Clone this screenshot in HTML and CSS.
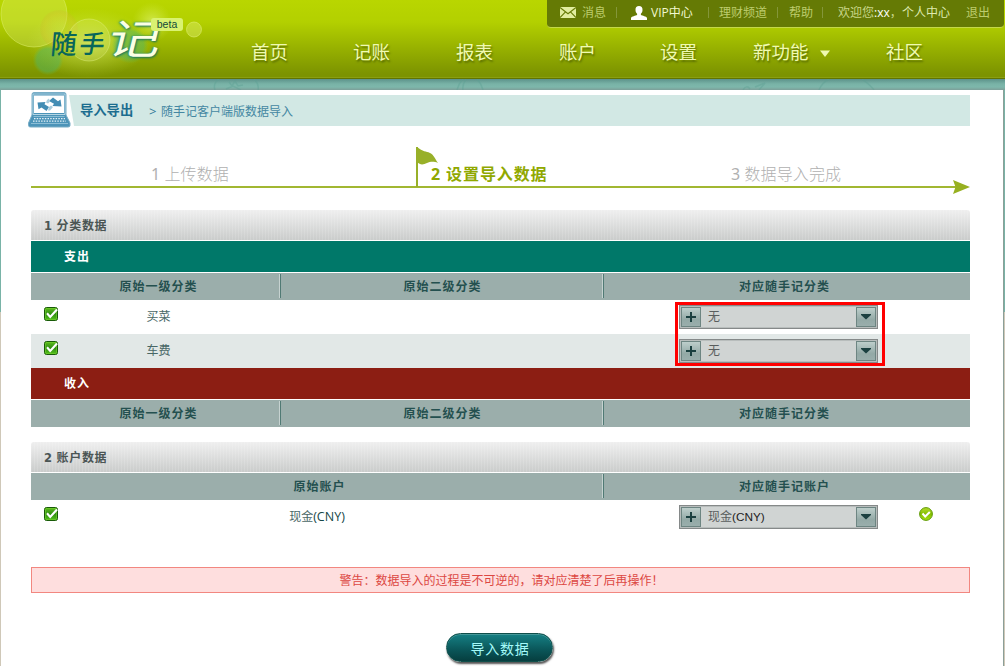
FILE: index.html
```html
<!DOCTYPE html>
<html lang="zh-CN">
<head>
<meta charset="utf-8">
<title>随手记</title>
<link rel="stylesheet" href="styles.css">
</head>
<body>
<svg class="defs" width="0" height="0">
  <defs>
    <linearGradient id="gCheck" x1="0" y1="0" x2="0" y2="1"><stop offset="0" stop-color="#5fbf1e"/><stop offset=".5" stop-color="#2f8c12"/><stop offset="1" stop-color="#55c41c"/></linearGradient>
    <linearGradient id="gOk" x1="0" y1="0" x2="0" y2="1"><stop offset="0" stop-color="#b5dc2e"/><stop offset=".5" stop-color="#84be00"/><stop offset="1" stop-color="#a5e010"/></linearGradient>
    <symbol id="check" viewBox="0 0 14 14"><rect x=".5" y=".5" width="13" height="13" rx="2" fill="url(#gCheck)" stroke="#185a08"/><rect x="1.5" y="1.5" width="11" height="11" rx="1" fill="none" stroke="#76d12f" stroke-opacity=".6"/><path d="M3 6.200l3.200 3.800L13 2.500" fill="none" stroke="#fff" stroke-width="2.100"/></symbol>
    <symbol id="plus" viewBox="0 0 18 18"><path d="M4 9h10M9 4v10" stroke="#1b4040" stroke-width="2"/></symbol>
    <symbol id="down" viewBox="0 0 18 18"><path d="M4 6h10v1l-5 4.600L4 7z" fill="#1b4040"/></symbol>
  </defs>
</svg>
<header class="header">
  <svg class="bubbles" width="250" height="78">
    <defs>
      <radialGradient id="glow"><stop offset="0" stop-color="#efff9c" stop-opacity=".5"/><stop offset=".6" stop-color="#e2f76f" stop-opacity=".22"/><stop offset="1" stop-color="#d5ec50" stop-opacity="0"/></radialGradient>
      <radialGradient id="teal"><stop offset="0" stop-color="#52b865" stop-opacity=".45"/><stop offset=".75" stop-color="#52b865" stop-opacity=".5"/><stop offset="1" stop-color="#65bf50" stop-opacity=".05"/></radialGradient>
      <radialGradient id="orange"><stop offset="0" stop-color="#cddd43" stop-opacity=".1"/><stop offset=".8" stop-color="#d5c52c" stop-opacity=".35"/><stop offset="1" stop-color="#d0b02c" stop-opacity=".15"/></radialGradient>
    </defs>
    <circle cx="34" cy="14" r="33" fill="#e0f171" fill-opacity=".32" stroke="#e0f26d" stroke-opacity=".5"/>
    <ellipse cx="88" cy="43" rx="62" ry="35" fill="url(#glow)"/>
    <circle cx="59" cy="29" r="19" fill="url(#orange)"/>
    <circle cx="89" cy="40" r="21" fill="#e4f583" fill-opacity=".2" stroke="#e6f58c" stroke-opacity=".4"/>
    <circle cx="48" cy="60" r="15" fill="url(#teal)"/>
    <circle cx="130" cy="45" r="18" fill="url(#teal)"/>
    <circle cx="152" cy="22" r="20" fill="url(#glow)"/>
    <circle cx="194" cy="29.500" r="7.500" fill="#dded6a" fill-opacity=".45" stroke="#dded6a" stroke-opacity=".65"/>
  </svg>
  <div class="logo"><span class="logo-a">随</span><span class="logo-b">手</span><span class="logo-c">记</span><span class="beta">beta</span></div>
  <div class="topbar">
    <svg class="mail" width="16" height="11" viewBox="0 0 16 11"><path fill="#e2eda0" d="M0 0h16v11H0z"/><path d="M0 .5l8 6.200L16 .5M0 10.500l5.500-5.700M16 10.500l-5.500-5.700" fill="none" stroke="#657a05" stroke-width="1.100"/></svg>
    <span class="t-msg">消息</span><i class="sep s1"></i>
    <svg class="person" width="16" height="14" viewBox="0 0 16 14"><path fill="#fff" d="M8 0c2.300 0 3.700 1.500 3.500 4 0 1.600-.7 3-1.600 3.800v1.300c1.600 1 5.300 1 6.100 3V14H0v-1.900c.8-2 4.500-2 6.100-3V7.800C5.200 7 4.500 5.600 4.500 4 4.300 1.500 5.700 0 8 0z"/></svg>
    <span class="t-vip">VIP中心</span><i class="sep s2"></i>
    <span class="t-fin">理财频道</span><i class="sep s3"></i>
    <span class="t-help">帮助</span><i class="sep s4"></i>
    <span class="t-hi">欢迎您<b>:xx</b>，</span><span class="t-me">个人中心</span><span class="t-out">退出</span>
  </div>
  <nav class="nav">
    <a>首页</a><a>记账</a><a>报表</a><a>账户</a><a>设置</a><a>新功能<svg class="caret" width="10" height="7"><path d="M0 .5h10L5 7z" fill="#eef9b0"/></svg></a><a>社区</a>
  </nav>
</header>
<div class="strip">
  <svg width="1005" height="11"><g fill="none" stroke="#5d9f93" stroke-width="1.500" opacity=".4"><path d="M215 11c-2-6 1-9 4-11M229 3l3 4 3-5 3 5 5-1M226 10l7-3 8 4M254 0c4 4 5 7 4 11M457 11c1-4 3-8 6-11M477 0c3 3 5 7 6 11M463 11c-1-5 1-8 3-11M819 11c2-5 6-9 10-11M862 0c4 3 9 7 12 11"/><path d="M743 11c2-4 5-4 7-1M755 8l10-4-6 7"/></g></svg>
</div>
<main class="panel">
  <div class="crumb">
    <svg class="laptop" width="43" height="36" viewBox="0 0 43 36"><path d="M6 .5h30a2 2 0 0 1 2 2V23l4 8v2.500q0 1.500-2 1.500H2.500q-2 0-2-1.500V31L4 23V2.500a2 2 0 0 1 2-2z" fill="#4c94b8" stroke="#79adc6"/><path d="M5 2h32v20.500H5z" fill="none" stroke="#b5d6e4"/><path d="M6 3.500h30v17.500H6z" fill="#fff"/><path d="M9.500 10.500l8-.5-1 2.200 4.500 2.800-2.500 4-5-3.500-3 1.800zM33.500 14.500l-1-7-2.500 1.800-5-3.800-4 3.500 5 2.800-1.500 2.200z" fill="#438db4"/><path d="M21 15l2-1.500 2 1.500-3 3.500h-2zM19 8l2-1.500 1 3-2 2-2-1z" fill="#a9cddd"/><path d="M5.500 24.500h31M3 31.500h37" stroke="#9cc8dc" stroke-width=".8"/><path d="M6 26.700h31M5 29.200h33" stroke="#e4f1f7" stroke-width="1.200" stroke-dasharray="1.500 1.200"/></svg>
    <div class="crumb-bar"><b class="crumb-title">导入导出</b><span class="gt">&gt;</span><span class="crumb-sub">随手记客户端版数据导入</span></div>
  </div>
  <div class="steps">
    <span class="step step1"><i>1</i> 上传数据</span>
    <span class="step step2"><i>2</i> 设置导入数据</span>
    <span class="step step3"><i>3</i> 数据导入完成</span>
    <svg class="track" width="939" height="48" viewBox="0 0 939 48"><path d="M0 40h926" stroke="#a1b731" stroke-width="2"/><path d="M922 33l17 7-17 7 2.500-7z" fill="#97b020"/><path d="M385 0h2v40h-2z" fill="#98b029"/><path d="M386 0c6 5 9 4 13 6 4 2 5 6 8 10-5-2-8-1-11 0-4 2-7 2-10-1z" fill="#98b029"/></svg>
  </div>

  <h2 class="sec-head"><i>1</i> 分类数据</h2>
  <div class="band out">支出</div>
  <div class="cols thead"><span>原始一级分类</span><span>原始二级分类</span><span>对应随手记分类</span></div>
  <div class="picked">
    <div class="cols row"><span class="first"><svg class="check" width="14" height="14"><use href="#check"/></svg><em>买菜</em></span><span></span><span class="pick"><span class="select"><svg class="btn" width="20" height="20"><use href="#plus"/></svg><em>无</em><svg class="btn" width="20" height="20"><use href="#down"/></svg></span></span></div>
    <div class="cols row alt"><span class="first"><svg class="check" width="14" height="14"><use href="#check"/></svg><em>车费</em></span><span></span><span class="pick"><span class="select"><svg class="btn" width="20" height="20"><use href="#plus"/></svg><em>无</em><svg class="btn" width="20" height="20"><use href="#down"/></svg></span></span></div>
    <div class="mark"></div>
  </div>
  <div class="band in">收入</div>
  <div class="cols thead"><span>原始一级分类</span><span>原始二级分类</span><span>对应随手记分类</span></div>

  <h2 class="sec-head second"><i>2</i> 账户数据</h2>
  <div class="cols two thead"><span>原始账户</span><span>对应随手记账户</span></div>
  <div class="cols two row"><span class="first"><svg class="check" width="14" height="14"><use href="#check"/></svg><em>现金<b>(CNY)</b></em></span><span class="pick"><span class="select"><svg class="btn" width="20" height="20"><use href="#plus"/></svg><em>现金<b>(CNY)</b></em><svg class="btn" width="20" height="20"><use href="#down"/></svg></span><svg class="ok" width="14" height="14"><circle cx="7" cy="7" r="6.400" fill="url(#gOk)" stroke="#609a0a"/><path d="M3.500 6.500L6.200 9.500 10.800 5" fill="none" stroke="#fff" stroke-width="2"/></svg></span></div>

  <div class="warn">警告：数据导入的过程是不可逆的，请对应清楚了后再操作！</div>
  <button class="submit">导入数据</button>
</main>
</body>
</html>
```
FILE: styles.css
```css
* { box-sizing: border-box; }
html, body { height: 666px; overflow: hidden; }
body {
  margin: 0;
  background: linear-gradient(#79b3a7 0, #79b3a7 312px, #cfc8b8 312px);
  font: 12px/1.2 "Open Sans", "Noto Sans CJK SC", sans-serif;
  color: #24504f;
}
i, em { font-style: normal; }
a { color: inherit; }
svg { display: block; flex: none; }
.defs { position: absolute; }

.header {
  position: relative;
  height: 79px;
  background: linear-gradient(#b9d600 0, #b3d000 22px, #7c9300 74px, #7c9300 77px);
  border-bottom: 1px solid #617400;
  box-shadow: inset 0 -1px #8a9e10;
}
.bubbles { position: absolute; left: 0; top: 0; }
.logo { position: absolute; left: 50px; top: 12px; width: 145px; height: 60px; color: #08665a; }
.logo span { position: absolute; line-height: 1; }
.logo-a { left: 1px; top: 18px; font-size: 26px; font-weight: 500; transform: skewX(-5deg) scaleY(1.05); }
.logo-b { left: 30px; top: 19px; font-size: 25px; font-weight: 500; transform: skewX(-10deg); }
.logo-c { left: 65px; top: 6px; font-size: 41px; color: #fbffe4; font-weight: 400; transform: skewX(-14deg) scaleX(1.28); text-shadow: 1px 1px 2px #19735b, -1px 0 2px #3e996a; }
.logo .beta { left: 101px; top: 6px; width: 32px; height: 13px; border-radius: 3px; background: #d9f271; color: #124a38; font: 10.500px/12px "Liberation Sans", sans-serif; text-align: center; }

.topbar {
  display: flex;
  align-items: center;
  height: 28px;
  width: 457px;
  margin-left: 547px;
  padding: 0 0 2px 13px;
  background: #657a05;
  border-bottom: 1px solid #c4d848;
  border-radius: 0 0 4px 4px;
  color: #bdcc6d;
  white-space: nowrap;
  position: absolute;
  top: 0;
}
.topbar span, .topbar svg, .sep { flex: none; }
.topbar span { padding-top: 1px; }
.sep { width: 1px; height: 11px; background: #84963a; }
.t-msg { width: 24px; margin-left: 6px; }
.s1 { margin-left: 10px; margin-right: 14px; }
.t-vip { width: 44px; margin-left: 4px; color: #f2f8d0; }
.s2 { margin-left: 13px; }
.t-fin { width: 48px; margin-left: 10px; }
.s3 { margin-left: 10px; }
.t-help { width: 24px; margin-left: 11px; }
.s4 { margin-left: 9px; }
.t-hi { width: 64px; margin-left: 15px; color: #c9d78a; }
.t-hi b { font-weight: 400; color: #fff; }
.t-me { width: 48px; color: #dfeab0; }
.t-out { margin-left: 16px; }

.nav {
  display: grid;
  grid-template-columns: 102px 103px 103px 101px 93px 133px 60px;
  padding: 40px 0 0 251px;
  font-size: 18.500px;
  line-height: 24px;
  color: #f0fab2;
  text-shadow: 1px 2px 2px #596d00;
}
.nav a { display: flex; align-items: center; white-space: nowrap; }
.caret { margin-left: 11px; margin-top: 2px; }

.strip { height: 11px; background: linear-gradient(#5c928a, #79b3a7 5px, #7db7ab 8px, #7d9f99); }

.panel {
  display: flex;
  flex-direction: column;
  width: 1002px;
  height: 576px;
  margin-left: 1px;
  padding: 0 33px 0 30px;
  background: #fff;
  box-shadow: 1px 0 #8b9f98;
}
.crumb { display: flex; height: 38px; margin-left: -4px; flex: none; }
.laptop { margin: 2px 0 0 1px; }
.crumb-bar {
  flex: 1;
  height: 31px;
  margin: 5px 0 0 -2px;
  padding-left: 11px;
  display: flex;
  align-items: center;
  background: #d2e8e4;
  clip-path: polygon(0 0, 100% 0, 100% 100%, 5px 100%);
  color: #4487a2;
}
.crumb-title { font-size: 13.300px; font-weight: 600; color: #1c6d8f; width: 69px; }
.gt { width: 12px; padding-top: 2px; color: #347b9a; font-size: 13px; }
.crumb-sub { padding-top: 3px; }

.steps { position: relative; height: 82px; display: flex; align-items: flex-start; padding-top: 36px; flex: none; font-size: 16px; color: #b0b0b0; }
.track { position: absolute; left: 0; top: 19px; }
.step { white-space: nowrap; line-height: 20px; }
.step i { font-family: "Noto Sans", sans-serif; font-weight: 400; }
.step1 { margin-left: 120px; width: 280px; font-weight: 300; letter-spacing: .1px; }
.step2 { width: 300px; font-weight: 700; color: #90a800; letter-spacing: .9px; }
.step2 i { font-weight: 700; }
.step3 { font-weight: 300; letter-spacing: .1px; }

.sec-head {
  flex: none;
  height: 30px;
  margin: 0 0 1px;
  padding: 1px 0 0 13px;
  border-radius: 3px 3px 0 0;
  background: repeating-linear-gradient(90deg, rgba(255,255,255,.12) 0 1px, transparent 1px 3px), linear-gradient(#efefef, #cacccb);
  font-size: 12px;
  line-height: 30px;
  letter-spacing: .7px;
  color: #4b5554;
}
.sec-head i { font-family: "DejaVu Sans", sans-serif; font-size: 11.500px; }
.sec-head.second { margin-top: 15px; }
.band { flex: none; height: 31px; margin-bottom: 1px; padding-left: 33px; line-height: 31px; font-weight: 700; letter-spacing: 1px; color: #fff; }
.out { background: #007869; }
.in { background: #8c1e13; }
.cols { display: grid; grid-template-columns: 250px 323px 366px; flex: none; }
.cols.two { grid-template-columns: 573px 366px; }
.thead { height: 27px; background: #9baeab; line-height: 27px; font-weight: 700; letter-spacing: 1px; text-align: center; }
.thead span { background: linear-gradient(#507a74, #507a74) right 0 top 1px / 1px 24px no-repeat, linear-gradient(#c6d2d0, #c6d2d0) right 0 top 1px / 2px 24px no-repeat; }
.thead span:first-child { padding-left: 5px; }
.thead span:last-child { background: none; padding-right: 5px; }
.two.thead span:first-child { padding-left: 4px; }
.row { height: 34px; }
.alt { background: #e2e8e7; }
.first { display: flex; padding-left: 13px; }
.first .check { margin-top: 7px; }
.first em { flex: 1; text-align: center; line-height: 34px; padding-right: 22px; color: #496766; }
.two .first em { padding-right: 28px; }
.first b { font-weight: 400; font-size: 12.500px; color: #164747; }
.pick { display: flex; padding: 5px 0 0 75px; }
.select {
  display: flex;
  align-items: center;
  width: 199px;
  height: 24px;
  border: 1px solid #858989;
  padding: 1px;
  background: #d0d4d3;
  box-shadow: inset 0 0 0 1px #b8bdbc;
}
.select em { flex: 1; padding: 1px 0 0 7px; color: #595d5d; }
.select b { font: 11.800px "Liberation Sans", sans-serif; color: #222; }
.btn { border: 1px solid #6d8582; background: linear-gradient(#bdcecb, #93a9a6 65%, #9aaeac); }
.ok { margin: 2px 0 0 41px; }
.picked { position: relative; flex: none; }
.mark { position: absolute; left: 644px; top: 2px; width: 210px; height: 64px; border: 3px solid #f00; }

.warn { flex: none; height: 26px; margin-top: 33px; padding-left: 2px; border: 1px solid #f28780; background: #fedede; color: #dc4742; text-align: center; line-height: 26px; }
.submit {
  flex: none;
  align-self: center;
  width: 107px;
  height: 29px;
  margin-top: 40px;
  margin-right: 3px;
  padding: 0 0 0 2px;
  border: 1px solid #104f4b;
  border-radius: 15px;
  background: linear-gradient(#168084, #0a5558 60%, #063e3f);
  box-shadow: 1px 2px 2px #555, inset 0 1px #449798;
  color: #a5fafa;
  font: 14px "Noto Sans CJK SC", sans-serif;
  letter-spacing: .8px;
}
```
